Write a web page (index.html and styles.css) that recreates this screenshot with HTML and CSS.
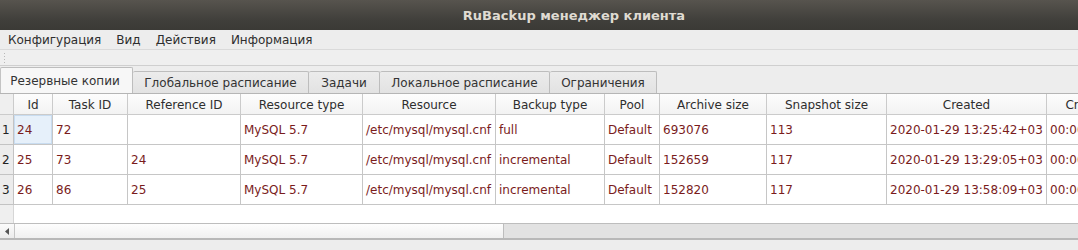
FILE: index.html
```html
<!DOCTYPE html>
<html>
<head>
<meta charset="utf-8">
<link rel="stylesheet" href="styles.css">
</head>
<body>
<div class="window">
  <div class="titlebar">RuBackup менеджер клиента</div>
  <div class="menubar">
    <span class="menu-item">Конфигурация</span>
    <span class="menu-item">Вид</span>
    <span class="menu-item">Действия</span>
    <span class="menu-item">Информация</span>
  </div>
  <div class="toolbar"><span class="grip"></span></div>
  <div class="tabbar">
    <div class="tab active">Резервные копии</div>
    <div class="tab">Глобальное расписание</div>
    <div class="tab">Задачи</div>
    <div class="tab">Локальное расписание</div>
    <div class="tab">Ограничения</div>
  </div>
  <div class="table">
    <div class="row header">
      <div class="cell corner"></div>
      <div class="cell">Id</div>
      <div class="cell">Task ID</div>
      <div class="cell">Reference ID</div>
      <div class="cell">Resource type</div>
      <div class="cell">Resource</div>
      <div class="cell">Backup type</div>
      <div class="cell">Pool</div>
      <div class="cell">Archive size</div>
      <div class="cell">Snapshot size</div>
      <div class="cell">Created</div>
      <div class="cell">Crypto</div>
    </div>
    <div class="row data">
      <div class="cell rh">1</div>
      <div class="cell selected">24</div>
      <div class="cell">72</div>
      <div class="cell"></div>
      <div class="cell">MySQL 5.7</div>
      <div class="cell">/etc/mysql/mysql.cnf</div>
      <div class="cell">full</div>
      <div class="cell">Default</div>
      <div class="cell">693076</div>
      <div class="cell">113</div>
      <div class="cell">2020-01-29 13:25:42+03</div>
      <div class="cell">00:00:01</div>
    </div>
    <div class="row data">
      <div class="cell rh">2</div>
      <div class="cell">25</div>
      <div class="cell">73</div>
      <div class="cell">24</div>
      <div class="cell">MySQL 5.7</div>
      <div class="cell">/etc/mysql/mysql.cnf</div>
      <div class="cell">incremental</div>
      <div class="cell">Default</div>
      <div class="cell">152659</div>
      <div class="cell">117</div>
      <div class="cell">2020-01-29 13:29:05+03</div>
      <div class="cell">00:00:01</div>
    </div>
    <div class="row data">
      <div class="cell rh">3</div>
      <div class="cell">26</div>
      <div class="cell">86</div>
      <div class="cell">25</div>
      <div class="cell">MySQL 5.7</div>
      <div class="cell">/etc/mysql/mysql.cnf</div>
      <div class="cell">incremental</div>
      <div class="cell">Default</div>
      <div class="cell">152820</div>
      <div class="cell">117</div>
      <div class="cell">2020-01-29 13:58:09+03</div>
      <div class="cell">00:00:01</div>
    </div>
    <div class="filler"><div class="filler-rh"></div><div class="filler-body"></div></div>
  </div>
  <div class="hscroll">
    <div class="arrow"><svg width="5" height="7" viewBox="0 0 5 7"><path d="M4 0 L0 3.5 L4 7 Z" fill="#555"/></svg></div>
    <div class="handle"></div>
    <div class="trough"></div>
  </div>
  <div class="statusbar"></div>
</div>
</body>
</html>
```

FILE: styles.css
```css
html, body {
  margin: 0;
  padding: 0;
  background: #ededed;
  overflow: hidden;
}
body {
  width: 1078px;
  height: 250px;
  font-family: "DejaVu Sans", sans-serif;
  font-size: 12px;
  color: #3c3c3c;
}
.window {
  display: flex;
  flex-direction: column;
  width: 1078px;
  height: 250px;
  overflow: hidden;
}
.titlebar {
  height: 30px;
  flex: none;
  background: linear-gradient(#57544e, #3f3e3a 70%, #3b3a36);
  color: #dfdbd2;
  font-weight: bold;
  font-size: 13px;
  display: flex;
  align-items: center;
  justify-content: center;
  padding-left: 70px;
  box-sizing: border-box;
}
.menubar {
  height: 20px;
  flex: none;
  display: flex;
  align-items: center;
  padding-left: 0;
  background: #ededed;
  border-bottom: 1px solid #dadada;
  box-sizing: border-box;
}
.menu-item {
  padding: 0 7px 0 8px;
  color: #2e2e2e;
}
.toolbar {
  height: 16px;
  flex: none;
  background: #efefef;
  border-bottom: 1px solid #cfcfcf;
  box-sizing: border-box;
  display: flex;
  align-items: center;
  padding-left: 3px;
}
.grip {
  width: 3px;
  height: 11px;
  background-image: radial-gradient(#b8b8b8 0.8px, transparent 1px);
  background-size: 3px 3px;
}
.tabbar {
  height: 27px;
  flex: none;
  display: flex;
  align-items: flex-end;
  background: #ededed;
  box-sizing: border-box;
  padding-top: 1px;
}
.tab {
  height: 22px;
  box-sizing: border-box;
  border: 1px solid #bdbdbd;
  border-bottom: none;
  border-left: none;
  border-radius: 2px 2px 0 0;
  background: linear-gradient(#ececec, #e2e2e2);
  display: flex;
  align-items: center;
  justify-content: center;
  color: #333;
  white-space: nowrap;
}
.tab.active {
  height: 26px;
  background: #f7f7f7;
  border-left: 1px solid #c4c4c4;
  width: 133px;
  padding-right: 3px;
}
.tab:nth-child(2) { width: 176px; }
.tab:nth-child(3) { width: 71px; }
.tab:nth-child(4) { width: 170px; }
.tab:nth-child(5) { width: 107px; }
.table {
  flex: none;
  height: 130px;
  background: #fff;
  border-top: 1px solid #b5b5b5;
  display: flex;
  flex-direction: column;
  box-sizing: border-box;
}
.row {
  display: grid;
  grid-template-columns: 14px 39px 75px 113px 122px 133px 109px 55px 107px 120px 160px 78px;
  flex: none;
}
.cell {
  box-sizing: border-box;
  border-right: 1px solid #c6c6c6;
  border-bottom: 1px solid #c6c6c6;
  white-space: nowrap;
  overflow: hidden;
  display: flex;
  align-items: center;
}
.header .cell {
  height: 21px;
  justify-content: center;
  background: linear-gradient(#fdfdfd, #f3f3f3);
  color: #2e2e2e;
  border-color: #cbcbcb;
  padding-top: 1px;
}
.header .corner {
  background: #efefef;
}
.data .cell {
  height: 30px;
  padding-left: 3px;
  color: #7a1c1c;
}
.data .cell.rh {
  background: #ececec;
  color: #222;
  padding-left: 2px;
  border-color: #c3c3c3;
}
.data .cell.selected {
  background: #e6f0fa;
  box-shadow: inset 0 0 0 1px #c8dcf0;
}
.filler {
  flex: 1;
  display: flex;
}
.filler-rh {
  width: 13px;
  background: #efefef;
  border-right: 1px solid #d6d6d6;
}
.filler-body {
  flex: 1;
  background: #fff;
}
.hscroll {
  height: 14px;
  flex: none;
  display: flex;
  border-top: 1px solid #bdbdbd;
  border-bottom: 2px solid #b8b8b8;
  background: #e3e3e3;
}
.arrow {
  width: 14px;
  flex: none;
  background: linear-gradient(#fbfbfb, #ececec);
  border-right: 1px solid #c6c6c6;
  display: flex;
  align-items: center;
  justify-content: center;
}
.handle {
  width: 488px;
  flex: none;
  background: linear-gradient(#fdfdfd, #f0f0f0);
  border-right: 1px solid #bdbdbd;
}
.trough {
  flex: 1;
  background: #e2e2e2;
}
.statusbar {
  flex: 1;
  background: #ededed;
}
```
